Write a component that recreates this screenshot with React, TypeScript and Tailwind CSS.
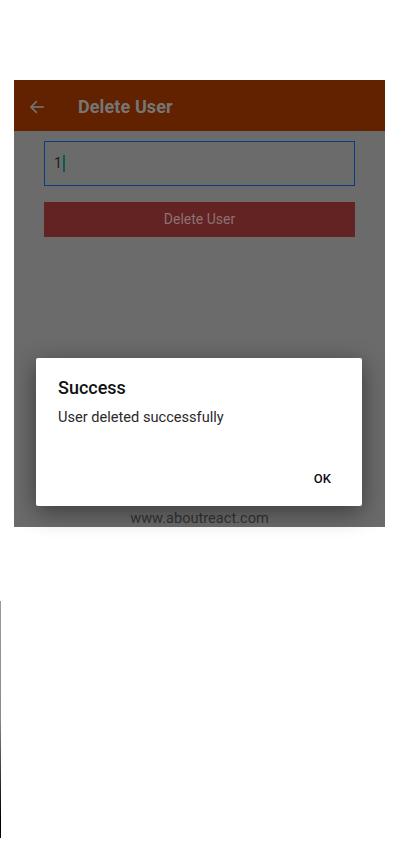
import React from "react";

export default function App() {
  return (
    <div className="relative w-[403px] h-[850px] bg-white overflow-hidden" style={{ fontFamily: "Roboto, 'Noto Sans', sans-serif" }}>
      <div className="h-[80px]" />
      <div className="relative mx-[14px] w-[371px] h-[447px] bg-[#6b6b6b] flex flex-col">
        <div className="h-[51px] bg-[#622200] flex items-center shrink-0 pt-[2px]">
          <svg className="ml-[14px]" width="18" height="18" viewBox="0 0 24 24" fill="none" stroke="#737373" strokeWidth="2.2" strokeLinecap="square">
            <path d="M20 12H5" />
            <path d="M11 5l-7 7 7 7" />
          </svg>
          <span className="ml-[32px] text-[18px] font-bold text-[#767676] tracking-[0.1px]">Delete User</span>
        </div>
        <div className="mx-[30px] mt-[10px] h-[45px] border border-[#0c3c80] flex items-center px-[9px]">
          <span className="text-[14px] text-[#1e1e1e]">1</span>
          <span className="ml-[1px] w-[2px] h-[17px] bg-[#0f5a4c]" />
        </div>
        <div className="mx-[30px] mt-[16px] h-[35px] bg-[#632323] flex items-center justify-center">
          <span className="text-[14px] text-[#8c7272]">Delete User</span>
        </div>
        <div className="flex-1" />
        <div className="h-[19px] flex items-start justify-center">
          <span className="text-[14.6px] leading-[20px] text-[#333]">www.aboutreact.com</span>
        </div>
        <div className="absolute left-[22px] top-[278px] w-[326px] h-[148px] bg-white rounded-[2px] shadow-[0_6px_24px_rgba(0,0,0,0.45)] flex flex-col">
          <div className="ml-[22px] mt-[16px] text-[18px] font-medium text-[#111]">Success</div>
          <div className="ml-[22px] mt-[6px] text-[14.6px] text-[#2a2a2a]">User deleted successfully</div>
          <div className="flex-1" />
          <div className="flex justify-end pr-[31px] pb-[18px]">
            <span className="text-[13px] font-medium text-[#111]">OK</span>
          </div>
        </div>
      </div>
      <div className="absolute left-0 top-[601px] w-[1px] h-[237px] bg-gradient-to-b from-[#9a9a9a] via-[#8a8a8a] to-[#000]" />
      <div className="absolute left-0 top-[816px] w-[1px] h-[22px] bg-black" />
    </div>
  );
}
